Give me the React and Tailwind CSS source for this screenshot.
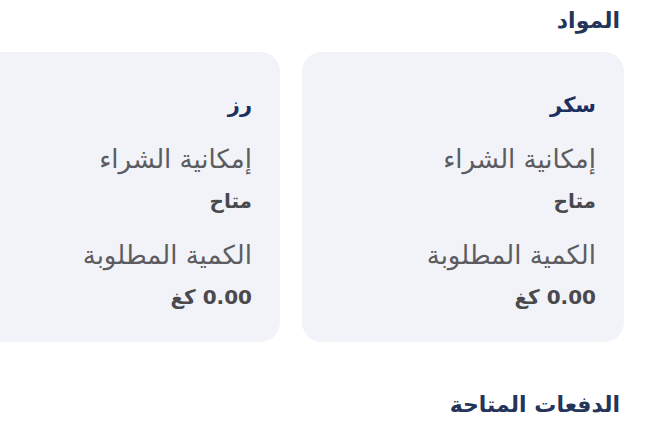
const materials = [
  { name: "سكر", status: "متاح", qty: "0.00 كغ" },
  { name: "رز", status: "متاح", qty: "0.00 كغ" },
];

function MaterialCard({ item }) {
  return (
    <div className="shrink-0 w-[322px] h-[290px] rounded-[20px] bg-[#f1f3f8] pt-[36px] px-[28px]">
      <h3 className="text-[21px] font-bold text-[#1d2f5f] leading-[34px]">{item.name}</h3>
      <p className="mt-[20px] text-[26px] text-[#5c5c60] leading-[34px]">إمكانية الشراء</p>
      <p className="mt-[8px] text-[20px] font-bold text-[#4a4a4e] leading-[34px]">{item.status}</p>
      <p className="mt-[20px] text-[26px] text-[#5c5c60] leading-[34px]">الكمية المطلوبة</p>
      <p className="mt-[8px] text-[20px] font-bold text-[#4a4a4e] leading-[34px]">{item.qty}</p>
    </div>
  );
}

export default function App() {
  return (
    <div
      dir="rtl"
      className="w-[650px] h-[433px] overflow-hidden bg-white"
      style={{ fontFamily: '"DejaVu Sans", sans-serif' }}
    >
      <h2 className="pr-[30px] pt-[4px] text-[22px] font-bold text-[#253559] leading-[34px]">المواد</h2>
      <div className="mt-[14px] flex gap-[22px] pr-[26px] overflow-hidden">
        {materials.map((m) => (
          <MaterialCard key={m.name} item={m} />
        ))}
      </div>
      <h2 className="mt-[46px] pr-[30px] text-[22px] font-bold text-[#253559] leading-[34px]">الدفعات المتاحة</h2>
    </div>
  );
}
